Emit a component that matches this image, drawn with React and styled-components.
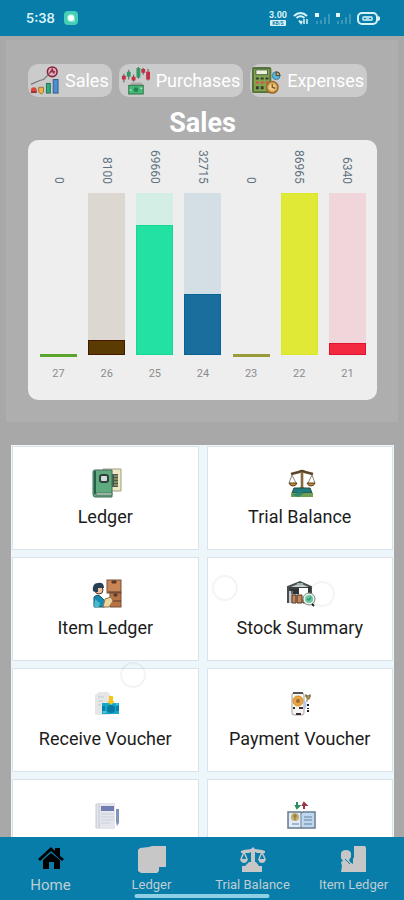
import React from "react"
import styled, { createGlobalStyle } from "styled-components"

const GlobalStyle = createGlobalStyle`
    :root {
        --brand: #087da9;
        --page: #a8a8a8;
        --panel: #aeaeae;
        --sheet: #edf6fb;
        --nav-text: #bfcdd3;
    }

    * {
        box-sizing: border-box;
    }

    body {
        margin: 0;
        background: var(--page);
        font-family: Roboto, "Liberation Sans", sans-serif;
    }
`

const Shell = styled.div`
    display: flex;
    flex-direction: column;
    height: 100vh;
    overflow: hidden;
`

const StatusBar = styled.header`
    display: flex;
    flex: none;
    align-items: center;
    justify-content: space-between;
    height: 36px;
    padding: 0 24px 0 26px;
    background: var(--brand);
    color: #d8f3f8;
`

const StatusGroup = styled.div`
    display: flex;
    align-items: center;
    gap: ${({ $gap }) => $gap}px;
`

const Clock = styled.span`
    font-family: Inter, Roboto, sans-serif;
    font-size: 13px;
    font-weight: 600;
`

const NetSpeed = styled.span`
    display: flex;
    flex-direction: column;
    align-items: center;
    font-size: 9px;
    font-weight: 700;
    line-height: 9px;

    small {
        padding: 0 2px;
        border-radius: 1px;
        background: #d8f3f8;
        color: var(--brand);
        font-size: 5px;
        line-height: 6px;
    }
`

const Content = styled.main`
    flex: 1;
    min-height: 0;
    padding-top: 4px;
    overflow: hidden;
`

const Panel = styled.section`
    margin: 0 6px;
    padding: 24px 21px 22px 22px;
    background: var(--panel);
`

const Tabs = styled.div`
    display: flex;
    gap: 7px;
`

const Tab = styled.button`
    display: flex;
    align-items: center;
    gap: 6px;
    height: 33px;
    padding: 0 3px 0 2px;
    border: 0;
    border-radius: 10px;
    background: #cbcbcb;
    color: #fff;
    font: 400 18px Roboto, sans-serif;
    cursor: pointer;

    svg {
        flex: none;
        width: 29px;
        height: 29px;
    }
`

const Title = styled.h1`
    margin: 10px 0 1px;
    color: #fff;
    font-size: 27px;
    font-weight: 700;
    line-height: 32px;
    text-align: center;
`

const ChartCard = styled.div`
    display: flex;
    justify-content: space-between;
    padding: 8px 11px 19px 12px;
    border-radius: 10px;
    background: #eee;
`

const Column = styled.div`
    display: flex;
    flex-direction: column;
    align-items: center;
    width: 37px;
`

const Value = styled.span`
    height: 36px;
    color: #5f7380;
    font-size: 12px;
    line-height: 14px;
    text-align: right;
    writing-mode: vertical-rl;
`

const Track = styled.div`
    display: flex;
    flex-direction: column;
    justify-content: flex-end;
    align-self: stretch;
    height: 162px;
    margin: 9px 0 12px;
    background: ${({ $color }) => $color};
`

const Fill = styled.div`
    border: 1px solid ${({ $edge }) => $edge};
    background: ${({ $color }) => $color};
`

const ZeroLine = styled.div`
    height: 3px;
    margin-bottom: -2px;
    background: ${({ $color }) => $color};
`

const Day = styled.span`
    color: #8c8c8c;
    font-size: 11px;
    line-height: 14px;
`

const Menu = styled.nav`
    position: relative;
    display: grid;
    grid-template-columns: 1fr 1fr;
    gap: 7px 8px;
    margin: 23px 10px 0 11px;
    padding: 1px;
    background: var(--sheet);
`

const MenuItem = styled.a`
    display: flex;
    flex-direction: column;
    align-items: center;
    gap: 7px;
    height: 104px;
    padding-top: 21px;
    border: 1px solid #d9e3e9;
    background: #fff;
    color: #1c1c1c;
    font-size: 18px;
    line-height: 24px;
    text-decoration: none;

    svg {
        width: 30px;
        height: 30px;
        margin-left: 4px;
    }
`

// fading ripple left by a touch on the menu
const TouchRipple = styled.span`
    position: absolute;
    top: ${({ $top }) => $top}px;
    left: ${({ $left }) => $left}px;
    width: 26px;
    height: 26px;
    border: 2px solid rgba(120, 130, 135, 0.09);
    border-radius: 50%;
    pointer-events: none;
`

const BottomNav = styled.nav`
    position: relative;
    display: grid;
    flex: none;
    grid-template-columns: repeat(4, 1fr);
    height: 63px;
    background: var(--brand);
`

const NavLink = styled.a`
    display: flex;
    flex-direction: column;
    align-items: center;
    gap: 2px;
    padding-top: 8px;
    color: var(--nav-text);
    font-size: ${({ $active }) => ($active ? 15 : 13)}px;
    line-height: 20px;
    text-decoration: none;
    white-space: nowrap;

    svg {
        width: 28px;
        height: 28px;
    }
`

const GestureBar = styled.span`
    position: absolute;
    bottom: 2px;
    left: 50%;
    width: 135px;
    height: 4px;
    border-radius: 2px;
    background: #8fd0e5;
    transform: translateX(-50%);
`

const RecordIcon = () => (
    <svg width="14" height="14" viewBox="0 0 14 14" aria-hidden="true">
        <rect width="14" height="14" rx="4" fill="#45cdb5" />
        <path d="M3 7a4 4 0 0 1 8 0v4H7a4 4 0 0 1-4-4z" fill="#7ce8d4" />
        <circle cx="7" cy="7" r="3" fill="#fff" />
    </svg>
)

const WifiIcon = () => (
    <svg width="16" height="14" viewBox="0 0 16 14" fill="none" stroke="#d8f3f8" strokeWidth="2" aria-hidden="true">
        <path d="M1 5c4-4 9-4 13 0M3.500 7c3-2.500 5-2.500 8 0" />
        <path d="M6 9.500l2 2.500 1-2" />
        <path d="M11 13V8M14 8v5" strokeWidth="1.500" />
    </svg>
)

const SignalIcon = () => (
    <svg width="15" height="13" viewBox="0 0 15 13" aria-hidden="true">
        <path d="M0 1h4v4H0z" fill="#e5f7fa" />
        <path d="M1 9h2v3H1zM5 8h2v4H5zM9 5h2v7H9zM13 2h2v10h-2z" fill="#3b98b8" />
    </svg>
)

const BatteryIcon = () => (
    <svg width="23" height="13" viewBox="0 0 23 13" aria-hidden="true">
        <rect x="1" y="1" width="19" height="11" rx="4" fill="none" stroke="#d8f3f8" strokeWidth="2" />
        <path d="M21 4l2 1v3l-2 1z" fill="#d8f3f8" />
        <rect x="5" y="4" width="11" height="5" rx="2" fill="#a9dce8" />
        <path d="M7 6.500h2M12 6.500h2" stroke="#087da9" />
    </svg>
)

const SalesIcon = () => (
    <svg viewBox="0 0 30 30" aria-hidden="true">
        <path d="M1 19l9-4 4-1 5-5" fill="none" stroke="#777" strokeWidth="1.200" />
        <circle cx="23" cy="6" r="5" fill="#d7b5bf" stroke="#86203b" strokeWidth="1.600" />
        <path d="M20 8l3-5 2 5M22 6h4" fill="none" stroke="#a42b45" strokeWidth="1.400" />
        <circle cx="4" cy="25" r="3" fill="#d9473f" />
        <path d="M1 26h6v2H1z" fill="#9c3434" />
        <path d="M9 22h5v5l-2 2-3-2z" fill="#e9b445" stroke="#947445" />
        <rect x="17" y="18" width="4" height="10" fill="#22b57a" stroke="#366" />
        <rect x="24" y="14" width="5" height="14" fill="#4c8fd2" stroke="#355d86" />
    </svg>
)

const PurchasesIcon = () => (
    <svg viewBox="0 0 30 30" aria-hidden="true">
        <path d="M3 8v9M8 4v10M13 9v7M18 1v12M23 2v7M28 3v12" stroke="#555" />
        <path d="M1 10h4v4H1zM11 11h4v4h-4zM21 3h4v4h-4zM26 6h4v8h-4z" fill="#c62e46" />
        <path d="M6 6h4v5H6zM16 2h4v10h-4z" fill="#2f9b64" />
        <path d="M11 17h10l3 4H8z" fill="#aaa" />
        <rect x="8" y="20" width="15" height="9" fill="#45b778" stroke="#38734d" />
        <circle cx="15.500" cy="24.500" r="2.500" fill="#218451" />
        <path d="M9 25h2M20 23h2" stroke="#d8ffe5" />
    </svg>
)

const ExpensesIcon = () => (
    <svg viewBox="0 0 30 30" aria-hidden="true">
        <rect x="1" y="2" width="18" height="25" rx="1" fill="#83a34e" stroke="#55723a" strokeWidth="2" />
        <rect x="4" y="4" width="12" height="5" fill="#f0f1dc" stroke="#464" />
        <path d="M4 12h3v2H4zM9 12h3v2H9zM14 12h3v2h-3zM4 21h3v3H4zM9 21h3v3H9z" fill="#333d32" />
        <path d="M4 16h3v2H4zM9 16h3v2H9zM14 16h3v2h-3z" fill="#dc504a" />
        <circle cx="25" cy="10" r="4" fill="#57b9d8" stroke="#427b91" />
        <path d="M25 6v4h4a4 4 0 0 0-4-4z" fill="#e6a72d" stroke="#345" />
        <circle cx="21" cy="22" r="6" fill="#d9a951" stroke="#9b692b" strokeWidth="1.500" />
        <circle cx="21" cy="22" r="3.500" fill="#e8cb8e" />
        <path d="M21 19v3l3 1" fill="none" stroke="#815c2a" strokeWidth="1.500" />
    </svg>
)

const LedgerIcon = () => (
    <svg viewBox="0 0 30 30" aria-hidden="true">
        <path d="M11 1h18v22H11z" fill="#eee8c6" stroke="#9b9c85" />
        <path d="M20 6h6v13h-6z" fill="#455c4c" />
        <path d="M22 8h4M22 11h4M22 14h4M22 17h4" stroke="#cbb67c" />
        <path d="M1 4q0-2 2-2h17v27H3q-2 0-2-3z" fill="#60aa7f" stroke="#40695a" />
        <path d="M3 3v23" stroke="#245f49" strokeWidth="2" />
        <path d="M4 25h16v2H4z" fill="#e7f0e8" stroke="#507664" />
        <rect x="8" y="7" width="8" height="7" rx="2" fill="#d2dede" stroke="#33403d" strokeWidth="2" />
    </svg>
)

const BalanceIcon = () => (
    <svg viewBox="0 0 30 30" aria-hidden="true">
        <path d="M15 2v18M4 6l8-2q3-2 6 0l8 2" fill="none" stroke="#5c4529" strokeWidth="2.500" />
        <path d="M15 4v15" stroke="#b58c43" />
        <path d="M5 7L2 15M5 7l4 8M25 7l-4 8M25 7l3 8" stroke="#8b8678" />
        <path d="M2 15h8q-1 3-4 3t-4-3zM20 15h8q-1 3-4 3t-4-3z" fill="#cb8a2d" stroke="#573d24" />
        <path d="M11 21q4-4 8 0z" fill="#8b612c" />
        <path d="M7 20h16l2 5H5z" fill="#217b7b" stroke="#244c46" />
        <path d="M4 25h22v4H4z" fill="#739e53" />
        <path d="M5 27l7-3 5 1-5 4" fill="#2e8b6e" />
    </svg>
)

const ItemLedgerIcon = () => (
    <svg viewBox="0 0 30 30" aria-hidden="true">
        <rect x="15" y="1" width="14" height="13" fill="#c88655" stroke="#75513a" />
        <rect x="18" y="14" width="11" height="14" fill="#b97243" stroke="#75513a" />
        <path d="M20 2h4v2h-4zM22 15h3v2h-3zM16 13h13M19 22h10" fill="#5d3928" stroke="#5d3928" />
        <circle cx="7" cy="11" r="4" fill="#efc3a4" stroke="#53372e" />
        <path d="M1 12Q0 4 6 4q6-1 6 5H6v4H3z" fill="#273f51" />
        <path d="M2 28V18q4-4 8 1l3 3 6-3 2 2-6 6-3 1z" fill="#168ab1" stroke="#1c536b" />
        <path d="M13 20l6-2 2 4-4 6h-6z" fill="#ead69d" stroke="#94734e" />
        <path d="M3 20l5 4-1 4H2z" fill="#45bad0" />
    </svg>
)

const StockIcon = () => (
    <svg viewBox="0 0 30 30" aria-hidden="true">
        <path d="M1 24V8l12-5 11 5v16" fill="#c8cbcb" stroke="#484d4e" strokeWidth="2" />
        <path d="M2 8h22v4H2z" fill="#3b4042" />
        <path d="M12 9h9v9h-9z" fill="#fff" />
        <path d="M4 10h8v5H4zM21 8h3v10h-3z" fill="#303436" />
        <path d="M5 12v12" stroke="#929a9c" />
        <path d="M5 16h4v8H5zM10 16h5v8h-5zM16 20h4v4h-4z" fill="#c48558" stroke="#583b2c" />
        <path d="M10 5h6" stroke="#98b1b4" strokeWidth="2" />
        <circle cx="22" cy="20" r="6" fill="#eef4f1" stroke="#7b8581" />
        <circle cx="22" cy="20" r="4" fill="#6ec9a0" />
        <path d="M20 20l2 1 2-3" fill="none" stroke="#2f957b" strokeWidth="1.500" />
        <path d="M25 25l2 2" stroke="#1b2321" strokeWidth="2" />
    </svg>
)

const ReceiveIcon = () => (
    <svg viewBox="0 0 30 30" aria-hidden="true">
        <path d="M3 5l4-3h9l3 4v19H3z" fill="#e5e7e7" />
        <path d="M6 7h6M6 11h5M6 15h3" stroke="#c5cccd" />
        <path d="M10 13h17v11H10z" fill="#16a6ca" />
        <path d="M10 16h3v5h-3zM24 16h3v5h-3z" fill="#0782aa" />
        <circle cx="19" cy="19" r="4" fill="#087aa1" />
        <path d="M17 6h4v5h2l-4 4-4-4h2z" fill="#f7c519" />
        <path d="M11 22h3M24 14h2" stroke="#95e1ea" />
    </svg>
)

const PaymentIcon = () => (
    <svg viewBox="0 0 30 30" aria-hidden="true">
        <rect x="5" y="3" width="12" height="22" rx="2" fill="#f5f5f4" stroke="#a5a3a3" />
        <path d="M6 3h10" stroke="#555" strokeWidth="2" />
        <circle cx="11" cy="11" r="5" fill="#e7a747" stroke="#d98f23" />
        <circle cx="11" cy="11" r="2" fill="#9e6832" />
        <path d="M6 18h2M12 18h4M9 24h5" stroke="#432c31" strokeWidth="2" />
        <path d="M18 5h6l-1 4-2 1-2-2z" fill="#a28845" />
        <path d="M19 4v3M23 4v3M20 9v3" fill="none" stroke="#777" />
        <path d="M21 14v2M21 18v1M21 20v2" stroke="#222" strokeWidth="2" />
        <path d="M17 11q3 4 0 8" fill="none" stroke="#b2c4ee" strokeWidth="2" />
    </svg>
)

const JournalIcon = () => (
    <svg viewBox="0 0 30 30" aria-hidden="true">
        <path d="M4 2h19v26H4z" fill="#e4e5ed" />
        <path d="M4 3v24M7 2v25" stroke="#c4c8ce" />
        <path d="M9 5h13v5H9z" fill="#717eb3" />
        <path d="M9 13h13M9 16h13M9 19h13M9 22h10" stroke="#ccd0d9" />
        <path d="M24 8h3v14l-2 3-1-4z" fill="#8195bc" />
    </svg>
)

const CashBookIcon = () => (
    <svg viewBox="0 0 30 30" aria-hidden="true">
        <path d="M10 1v4M9 5l1 2 2-2z" fill="#2c8d60" stroke="#2c8d60" strokeWidth="2" />
        <path d="M17 8V4M16 4l1-2 2 2z" fill="#9e3346" stroke="#9e3346" strokeWidth="2" />
        <path d="M1 11h13l1 1 1-1h12v16H1z" fill="#dfeafa" stroke="#66798d" strokeWidth="1.500" />
        <path d="M15 12h12v14H15z" fill="#bed7f1" />
        <path d="M14 12v15" stroke="#65788b" />
        <circle cx="8" cy="16" r="4" fill="#c4af6c" />
        <path d="M6 15h4M8 13v6" stroke="#846f42" />
        <path d="M5 23h7M17 16h8M17 19h8M17 23h8" stroke="#66819c" />
    </svg>
)

const HomeIcon = () => (
    <svg viewBox="0 0 28 28" fill="#000" aria-hidden="true">
        <path d="M1 14L14 2l4 4V3h5v8l4 3-2 2L14 6 3 16z" />
        <path d="M6 15l8-7 9 7v9h-6v-7h-5v7H6z" />
    </svg>
)

const NavLedgerIcon = () => (
    <svg viewBox="0 0 28 28" fill="#c7c7c7" aria-hidden="true">
        <path d="M11 2l3-1h14v21h-7v4l-2 2H3l-3-2V5l2-2z" />
    </svg>
)

const NavBalanceIcon = () => (
    <svg viewBox="0 0 28 28" fill="#c7c7c7" aria-hidden="true">
        <path d="M12 4l2-2 2 2 7 1 3 1v2h-8l-2-1v10h1l3 4h3v6H3v-6h3l4-4h2V7l-2 1H2V6l3-1z" />
        <path d="M5 7L2 14M5 7l3 7M23 7l-3 7M23 7l3 7" stroke="#c7c7c7" strokeWidth="1.500" />
        <path d="M1 14h8q-1 4-4 4t-4-4zM19 14h8q-1 4-4 4t-4-4z" />
    </svg>
)

const NavItemIcon = () => (
    <svg viewBox="0 0 28 28" fill="#c7c7c7" aria-hidden="true">
        <path d="M14 1h11l1 2v24H13V13h1z" />
        <path d="M1 8q1-3 5-3 4 0 5 3v4l-2 3 1 2 3 2 2-2 3 1v9H1l1-6-1-4 2-1-2-3z" />
        <path d="M5 14l5 5" stroke="#087da9" />
    </svg>
)

const tabs = [
    { label: "Sales", Icon: SalesIcon },
    { label: "Purchases", Icon: PurchasesIcon },
    { label: "Expenses", Icon: ExpensesIcon },
]

const sales = [
    { day: 27, value: 0, color: "#5ca52d", track: "transparent" },
    { day: 26, value: 8100, color: "#5a3c02", edge: "#451600", track: "#ddd7d1" },
    { day: 25, value: 69660, color: "#23e1a2", edge: "#16d893", track: "#d3efe5" },
    { day: 24, value: 32715, color: "#196e9e", edge: "#086294", track: "#d3dfe5" },
    { day: 23, value: 0, color: "#999b39", track: "transparent" },
    { day: 22, value: 86965, color: "#dfe936", edge: "#dbe629", track: "#edf0c8" },
    { day: 21, value: 6340, color: "#f3293f", edge: "#df132d", track: "#f0d5db" },
]

const highest = Math.max(...sales.map((s) => s.value))

const menuItems = [
    { id: "ledger", label: "Ledger", Icon: LedgerIcon },
    { id: "trial", label: "Trial Balance", Icon: BalanceIcon },
    { id: "item", label: "Item Ledger", Icon: ItemLedgerIcon },
    { id: "stock", label: "Stock Summary", Icon: StockIcon },
    { id: "receive", label: "Receive Voucher", Icon: ReceiveIcon },
    { id: "payment", label: "Payment Voucher", Icon: PaymentIcon },
    { id: "journal", name: "Journal", Icon: JournalIcon },
    { id: "cash", name: "Cash Book", Icon: CashBookIcon },
]

const navItems = [
    { label: "Home", Icon: HomeIcon, active: true },
    { label: "Ledger", Icon: NavLedgerIcon },
    { label: "Trial Balance", Icon: NavBalanceIcon },
    { label: "Item Ledger", Icon: NavItemIcon },
]

const SalesChart = () => (
    <ChartCard>
        {sales.map(({ day, value, color, edge, track }) => (
            <Column key={day}>
                <Value>{value}</Value>
                <Track $color={track}>
                    {value > 0 ? (
                        <Fill $color={color} $edge={edge} style={{ height: `${(value / highest) * 100}%` }} />
                    ) : (
                        <ZeroLine $color={color} />
                    )}
                </Track>
                <Day>{day}</Day>
            </Column>
        ))}
    </ChartCard>
)

const App = () => {
    return (
        <Shell>
            <GlobalStyle />
            <StatusBar>
                <StatusGroup $gap={9}>
                    <Clock>5:38</Clock>
                    <RecordIcon />
                </StatusGroup>
                <StatusGroup $gap={6}>
                    <NetSpeed>
                        <span>3.00</span>
                        <small>KB/S</small>
                    </NetSpeed>
                    <WifiIcon />
                    <SignalIcon />
                    <SignalIcon />
                    <BatteryIcon />
                </StatusGroup>
            </StatusBar>
            <Content>
                <Panel>
                    <Tabs>
                        {tabs.map(({ label, Icon }) => (
                            <Tab key={label} type="button">
                                <Icon />
                                {label}
                            </Tab>
                        ))}
                    </Tabs>
                    <Title>Sales</Title>
                    <SalesChart />
                </Panel>
                <Menu>
                    {menuItems.map(({ id, label, name, Icon }) => (
                        <MenuItem key={id} href="#" aria-label={name}>
                            <Icon />
                            {label}
                        </MenuItem>
                    ))}
                    <TouchRipple $top={130} $left={201} />
                    <TouchRipple $top={136} $left={298} />
                    <TouchRipple $top={217} $left={109} />
                </Menu>
            </Content>
            <BottomNav>
                {navItems.map(({ label, Icon, active }) => (
                    <NavLink key={label} href="#" $active={active}>
                        <Icon />
                        {label}
                    </NavLink>
                ))}
                <GestureBar />
            </BottomNav>
        </Shell>
    )
}

export default App;
